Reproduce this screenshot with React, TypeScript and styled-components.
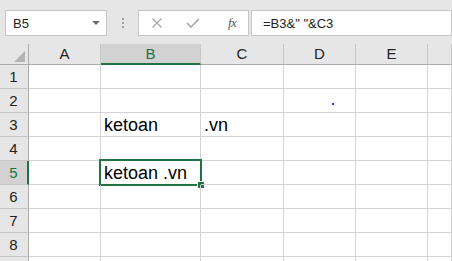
import React from "react";
import styled, { createGlobalStyle, css } from "styled-components";

const GREEN = "#217346";

const Global = createGlobalStyle`
  html, body { margin: 0; padding: 0; background: #fff; overflow: hidden; }
  body { font-family: "Liberation Sans", Arial, sans-serif; }
`;

const Page = styled.div`
  width: 452px;
  height: 261px;
  overflow: hidden;
  display: flex;
  flex-direction: column;
`;

const Toolbar = styled.div`
  height: 44px;
  flex: none;
  background: #e6e6e6;
  display: flex;
  align-items: flex-start;
  padding: 10px 0 0 5px;
  box-sizing: border-box;
`;

const Box = styled.div<{ $w?: number }>`
  height: 26px;
  box-sizing: border-box;
  border: 1px solid #c6c6c6;
  background: #fff;
  display: flex;
  align-items: center;
  ${(p) => (p.$w ? css`width: ${p.$w}px; flex: none;` : css`flex: 1;`)}
`;

const NameText = styled.span`
  font-size: 13px;
  color: #222;
  padding-left: 7px;
  flex: 1;
`;

const Caret = styled.span`
  width: 0;
  height: 0;
  border-left: 4px solid transparent;
  border-right: 4px solid transparent;
  border-top: 4px solid #6d6d6d;
  margin-right: 6px;
  margin-top: -1px;
`;

const Grip = styled.div`
  width: 31px;
  height: 26px;
  flex: none;
  display: flex;
  flex-direction: column;
  align-items: center;
  justify-content: center;
  gap: 2px;
  & > i {
    width: 2px;
    height: 2px;
    background: #a0a0a0;
    display: block;
  }
`;

const IconSlot = styled.span<{ $ml: number }>`
  margin-left: ${(p) => p.$ml}px;
  display: flex;
  align-items: center;
  color: #a6a6a6;
`;

const Fx = styled.span`
  margin-left: 28px;
  font-family: "Liberation Serif", "Times New Roman", serif;
  font-style: italic;
  font-size: 13px;
  color: #555;
  letter-spacing: -0.5px;
`;

const Gap = styled.div`
  width: 2px;
  flex: none;
`;

const FormulaText = styled.span`
  font-size: 13px;
  color: #222;
  padding-left: 11px;
  white-space: pre;
`;

const Sheet = styled.div`
  display: grid;
  grid-template-columns: 29px 72px 100px 83px 72px 72px 1fr;
  grid-auto-rows: 24px;
  grid-template-rows: 21px;
`;

const Corner = styled.div`
  background: #e6e6e6;
  border-right: 1px solid #ababab;
  border-bottom: 1px solid #ababab;
  box-sizing: border-box;
  display: flex;
  align-items: flex-end;
  justify-content: flex-end;
  padding: 0 3px 2px 0;
`;

const Tri = styled.span`
  width: 0;
  height: 0;
  border-left: 11px solid transparent;
  border-bottom: 11px solid #b4b4b4;
`;

const ColHead = styled.div<{ $sel?: boolean }>`
  background: ${(p) => (p.$sel ? "#d2d2d2" : "#e6e6e6")};
  color: ${(p) => (p.$sel ? GREEN : "#222")};
  border-right: 1px solid #c6c6c6;
  border-bottom: ${(p) => (p.$sel ? `2px solid ${GREEN}` : "1px solid #ababab")};
  box-sizing: border-box;
  font-size: 15px;
  display: flex;
  align-items: flex-end;
  justify-content: center;
  padding-bottom: ${(p) => (p.$sel ? 0 : 1)}px;
  line-height: 18px;
`;

const RowHead = styled.div<{ $sel?: boolean }>`
  background: ${(p) => (p.$sel ? "#d2d2d2" : "#e6e6e6")};
  color: ${(p) => (p.$sel ? GREEN : "#222")};
  border-right: ${(p) => (p.$sel ? `2px solid ${GREEN}` : "1px solid #ababab")};
  border-bottom: 1px solid #c6c6c6;
  box-sizing: border-box;
  font-size: 15px;
  display: flex;
  align-items: flex-end;
  justify-content: center;
  padding: 0 ${(p) => (p.$sel ? 0 : 1)}px 2px 0;
  line-height: 18px;
`;

const Cell = styled.div`
  position: relative;
  border-right: 1px solid #d4d4d4;
  border-bottom: 1px solid #d4d4d4;
  box-sizing: border-box;
  font-size: 18px;
  color: #000;
  display: flex;
  align-items: flex-end;
  padding: 0 0 1px 3px;
  line-height: 20px;
  white-space: nowrap;
`;

const Selection = styled.div`
  position: absolute;
  left: -2px;
  top: -2px;
  right: -2px;
  bottom: -2px;
  border: 2px solid ${GREEN};
  pointer-events: none;
`;

const Handle = styled.div`
  position: absolute;
  right: -4px;
  bottom: -4px;
  width: 6px;
  height: 6px;
  background: ${GREEN};
  outline: 1px solid #fff;
`;

const Speck = styled.span`
  position: absolute;
  left: 48px;
  top: 14px;
  width: 2px;
  height: 2px;
  background: #3030ff;
`;

const cols = ["A", "B", "C", "D", "E", ""];

const data: Record<string, string> = {
  "3-1": "ketoan",
  "3-2": ".vn",
  "5-1": "ketoan .vn",
};

export default function App() {
  const rows = [1, 2, 3, 4, 5, 6, 7, 8, 9];
  return (
    <Page>
      <Global />
      <Toolbar>
        <Box $w={102}>
          <NameText>B5</NameText>
          <Caret />
        </Box>
        <Grip>
          <i />
          <i />
          <i />
        </Grip>
        <Box $w={111}>
          <IconSlot $ml={12}>
            <svg width="12" height="12" viewBox="0 0 12 12">
              <path d="M1.5 1.5 L10.5 10.5 M10.5 1.5 L1.5 10.5" stroke="#a6a6a6" strokeWidth="1.3" fill="none" />
            </svg>
          </IconSlot>
          <IconSlot $ml={23}>
            <svg width="14" height="10" viewBox="0 0 14 10">
              <path d="M1 5 L5 9 L13 1" stroke="#a6a6a6" strokeWidth="1.6" fill="none" />
            </svg>
          </IconSlot>
          <Fx>fx</Fx>
        </Box>
        <Gap />
        <Box>
          <FormulaText>=B3&amp;" "&amp;C3</FormulaText>
        </Box>
      </Toolbar>
      <Sheet>
        <Corner>
          <Tri />
        </Corner>
        {cols.map((c, i) => (
          <ColHead key={c + i} $sel={c === "B"}>
            {c}
          </ColHead>
        ))}
        {rows.map((r) => (
          <React.Fragment key={r}>
            <RowHead $sel={r === 5}>{r < 9 ? r : ""}</RowHead>
            {cols.map((c, i) => {
              const active = r === 5 && i === 1;
              return (
                <Cell key={c + i}>
                  {data[`${r}-${i}`] ?? ""}
                  {r === 2 && i === 3 && <Speck />}
                  {active && (
                    <Selection>
                      <Handle />
                    </Selection>
                  )}
                </Cell>
              );
            })}
          </React.Fragment>
        ))}
      </Sheet>
    </Page>
  );
}
